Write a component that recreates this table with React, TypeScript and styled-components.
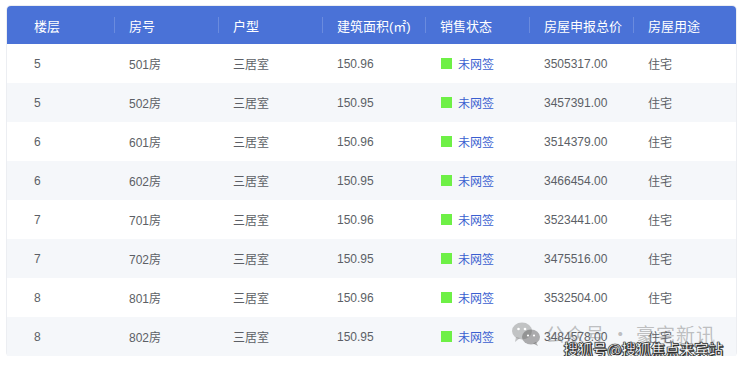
import React from "react";
import styled, { createGlobalStyle } from "styled-components";

const GlobalStyle = createGlobalStyle`
  html, body {
    margin: 0;
    padding: 0;
    background: #ffffff;
  }
  body {
    font-family: "Liberation Sans", "Noto Sans CJK SC", sans-serif;
  }
`;

const COLS = "107px 104px 104px 103px 104px 104px 103px";

const Page = styled.div`
  padding: 6px 4px 0 7px;
`;

const Table = styled.div`
  position: relative;
  width: 729px;
  border-radius: 4px;
  box-shadow: 0 0 0 1px #eceef2, 0 1px 2px rgba(0, 0, 0, 0.06);
  background: #fff;
`;

const HeaderRow = styled.div`
  display: grid;
  grid-template-columns: ${COLS};
  height: 38px;
  background: #4a72d7;
  border-radius: 4px 4px 0 0;
`;

const HeaderCell = styled.div<{ $first?: boolean }>`
  position: relative;
  display: flex;
  align-items: center;
  padding-left: ${(p) => (p.$first ? 27 : 15)}px;
  color: #ffffff;
  font-size: 13px;
  &::before {
    content: "";
    display: ${(p) => (p.$first ? "none" : "block")};
    position: absolute;
    left: 0;
    top: 11px;
    height: 16px;
    width: 1px;
    background: rgba(255, 255, 255, 0.18);
  }
`;

const Row = styled.div<{ $striped: boolean }>`
  display: grid;
  grid-template-columns: ${COLS};
  height: 39px;
  background: ${(p) => (p.$striped ? "#f5f7fa" : "#ffffff")};
  &:last-of-type {
    border-radius: 0 0 4px 4px;
  }
`;

const Cell = styled.div<{ $first?: boolean }>`
  display: flex;
  align-items: center;
  padding-left: ${(p) => (p.$first ? 27 : 15)}px;
  color: #5c5f66;
  font-size: 12px;
`;

const Status = styled.div`
  display: flex;
  align-items: center;
  gap: 6px;
  padding-left: 16px;
  color: #3a5fd0;
  font-size: 12px;
`;

const Dot = styled.span`
  width: 11px;
  height: 11px;
  background: #6ef046;
`;

const Watermark = styled.div`
  position: absolute;
  right: 20px;
  bottom: 9px;
  display: flex;
  align-items: center;
  gap: 4px;
  color: rgba(120, 120, 120, 0.45);
  font-size: 19px;
  font-family: "Noto Sans CJK SC", sans-serif;
  pointer-events: none;
  letter-spacing: 1px;
`;

const Stamp = styled.div`
  position: absolute;
  right: 13px;
  bottom: -3px;
  color: #ffffff;
  font-size: 14.5px;
  font-weight: bold;
  font-family: "Noto Sans CJK SC", sans-serif;
  -webkit-text-stroke: 0.6px #333;
  text-shadow: 0 0 1px #000, 1px 1px 0 #333;
  pointer-events: none;
`;

const headers = ["楼层", "房号", "户型", "建筑面积(㎡)", "销售状态", "房屋申报总价", "房屋用途"];

const rows = [
  ["5", "501房", "150.96", "3505317.00"],
  ["5", "502房", "150.95", "3457391.00"],
  ["6", "601房", "150.96", "3514379.00"],
  ["6", "602房", "150.95", "3466454.00"],
  ["7", "701房", "150.96", "3523441.00"],
  ["7", "702房", "150.95", "3475516.00"],
  ["8", "801房", "150.96", "3532504.00"],
  ["8", "802房", "150.95", "3484578.00"],
];

const WeChat = () => (
  <svg width="30" height="26" viewBox="0 0 30 26">
    <ellipse cx="11" cy="10" rx="10" ry="8.5" fill="rgba(130,130,130,0.45)" />
    <path d="M5 16 L4 21 L9 17 Z" fill="rgba(130,130,130,0.45)" />
    <ellipse cx="20" cy="16" rx="9" ry="7.5" fill="rgba(110,110,110,0.55)" />
    <path d="M25 21 L27 25 L22 22.5 Z" fill="rgba(110,110,110,0.55)" />
    <circle cx="7.5" cy="8" r="1.3" fill="#fff" />
    <circle cx="14" cy="8" r="1.3" fill="#fff" />
    <circle cx="17" cy="14.5" r="1.1" fill="#fff" />
    <circle cx="23" cy="14.5" r="1.1" fill="#fff" />
  </svg>
);

export default function App() {
  return (
    <Page>
      <GlobalStyle />
      <Table>
        <HeaderRow>
          {headers.map((h, i) => (
            <HeaderCell key={h} $first={i === 0}>
              {h}
            </HeaderCell>
          ))}
        </HeaderRow>
        {rows.map((r, i) => (
          <Row key={r[1]} $striped={i % 2 === 1}>
            <Cell $first>{r[0]}</Cell>
            <Cell>{r[1]}</Cell>
            <Cell>三居室</Cell>
            <Cell>{r[2]}</Cell>
            <Status>
              <Dot />
              未网签
            </Status>
            <Cell>{r[3]}</Cell>
            <Cell>住宅</Cell>
          </Row>
        ))}
        <Watermark>
          <WeChat />
          公众号 · 豪宅新讯
        </Watermark>
        <Stamp>搜狐号@搜狐焦点来宾站</Stamp>
      </Table>
    </Page>
  );
}
